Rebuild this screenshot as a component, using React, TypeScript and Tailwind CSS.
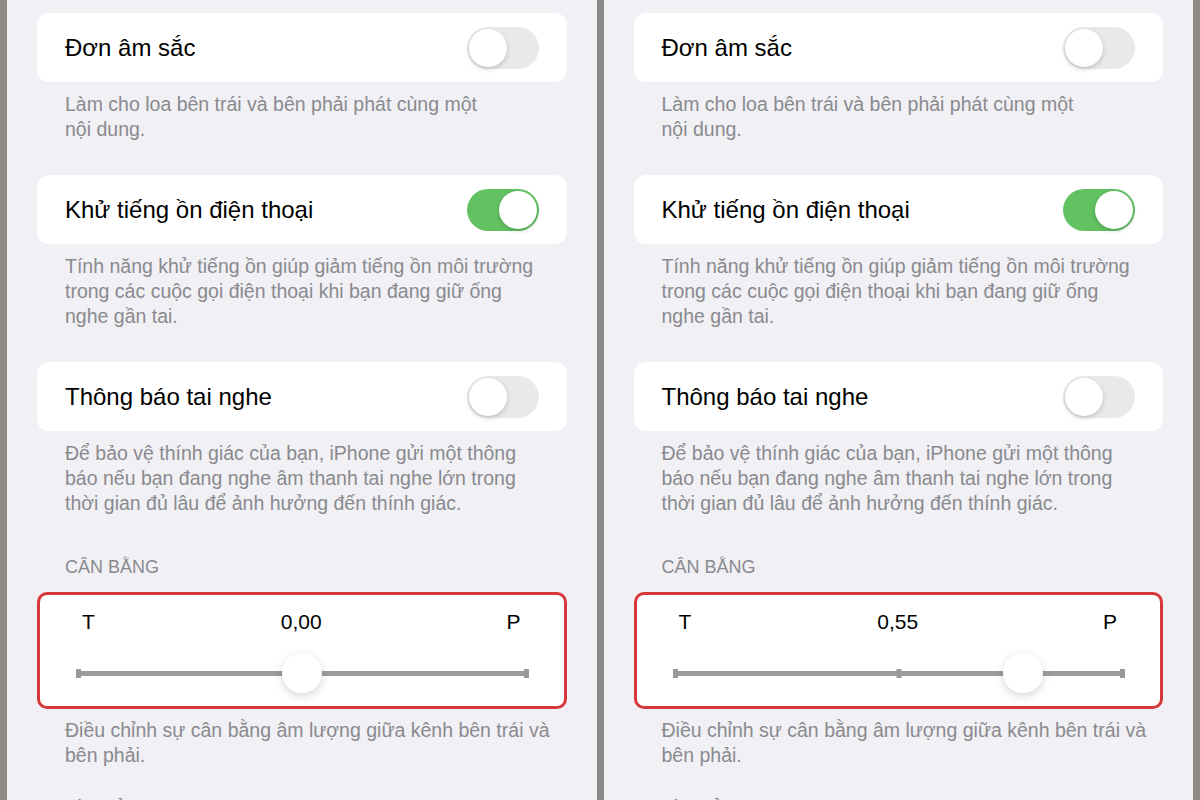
const sections = [
  {
    title: "Đơn âm sắc",
    on: false,
    desc: ["Làm cho loa bên trái và bên phải phát cùng một", "nội dung."],
  },
  {
    title: "Khử tiếng ồn điện thoại",
    on: true,
    desc: [
      "Tính năng khử tiếng ồn giúp giảm tiếng ồn môi trường",
      "trong các cuộc gọi điện thoại khi bạn đang giữ ống",
      "nghe gần tai.",
    ],
  },
  {
    title: "Thông báo tai nghe",
    on: false,
    desc: [
      "Để bảo vệ thính giác của bạn, iPhone gửi một thông",
      "báo nếu bạn đang nghe âm thanh tai nghe lớn trong",
      "thời gian đủ lâu để ảnh hưởng đến thính giác.",
    ],
  },
];

function Toggle({ on }: { on: boolean }) {
  return (
    <div
      className={`flex h-[42px] w-[72px] items-center rounded-full p-[2px] ${
        on ? "justify-end bg-[#62c262]" : "justify-start bg-[#e9e9eb]"
      }`}
    >
      <div className="h-[38px] w-[38px] rounded-full bg-white shadow-[0_2px_5px_rgba(0,0,0,0.18)]" />
    </div>
  );
}

function Desc({ lines }: { lines: string[] }) {
  return (
    <div className="pl-[28px] text-[19.5px] leading-[25px] text-[#8a8a8e]">
      {lines.map((l) => (
        <p key={l}>{l}</p>
      ))}
    </div>
  );
}

function Panel({ value }: { value: number }) {
  const pct = 50 + value * 50;
  const label = value.toFixed(2).replace(".", ",");

  return (
    <div className="h-full flex-1 overflow-hidden bg-[#f0f0f5] px-[30px] pt-[13px]">
      {sections.map((s, i) => (
        <div key={s.title} className={i > 0 ? "mt-[33px]" : ""}>
          <div className="flex h-[69px] items-center justify-between rounded-[12px] bg-white pl-[28px] pr-[28px]">
            <span className="text-[24px] text-black">{s.title}</span>
            <Toggle on={s.on} />
          </div>
          <div className="pt-[10px]">
            <Desc lines={s.desc} />
          </div>
        </div>
      ))}

      <p className="mt-[39px] pl-[28px] text-[18px] leading-[24px] text-[#8a8a8e]">
        CÂN BẰNG
      </p>

      <div className="mt-[13px] h-[117px] rounded-[10px] border-[3px] border-[#d8373c] bg-white">
        <div className="grid h-[39px] grid-cols-3 items-end pl-[42px] pr-[43px] text-[21px] leading-[24px] text-black">
          <span>T</span>
          <span className="text-center">{label}</span>
          <span className="text-right">P</span>
        </div>
        <div className="relative mt-[19px] ml-[36px] mr-[35px] h-[40px]">
          <div className="absolute left-0 right-0 top-[18px] h-[5px] bg-[#9c9c9c]" />
          <div className="absolute left-0 top-[16px] h-[9px] w-[5px] bg-[#999]" />
          <div className="absolute left-1/2 top-[16px] h-[9px] w-[5px] -translate-x-1/2 bg-[#999]" />
          <div className="absolute right-0 top-[16px] h-[9px] w-[5px] bg-[#999]" />
          <div
            className="absolute top-0 h-[40px] w-[40px] -translate-x-1/2 rounded-full bg-white shadow-[0_3px_10px_rgba(0,0,0,0.16)]"
            style={{ left: `${pct}%` }}
          />
        </div>
      </div>

      <div className="pt-[9px]">
        <Desc lines={["Điều chỉnh sự cân bằng âm lượng giữa kênh bên trái và", "bên phải."]} />
      </div>

      <p className="mt-[29px] pl-[28px] text-[18px] leading-[24px] text-[#8a8a8e]">
        HÌNH ẢNH
      </p>
    </div>
  );
}

export default function App() {
  return (
    <div
      className="flex h-[800px] w-[1200px] overflow-hidden bg-[#8b8885]"
      style={{ fontFamily: '"Liberation Sans", Arial, sans-serif' }}
    >
      <div className="w-[7px] bg-[#8d8a86]" />
      <Panel value={0} />
      <div className="w-[7px] bg-[#8a8a8a]" />
      <Panel value={0.55} />
      <div className="w-[7px] bg-[#8d8a86]" />
    </div>
  );
}
